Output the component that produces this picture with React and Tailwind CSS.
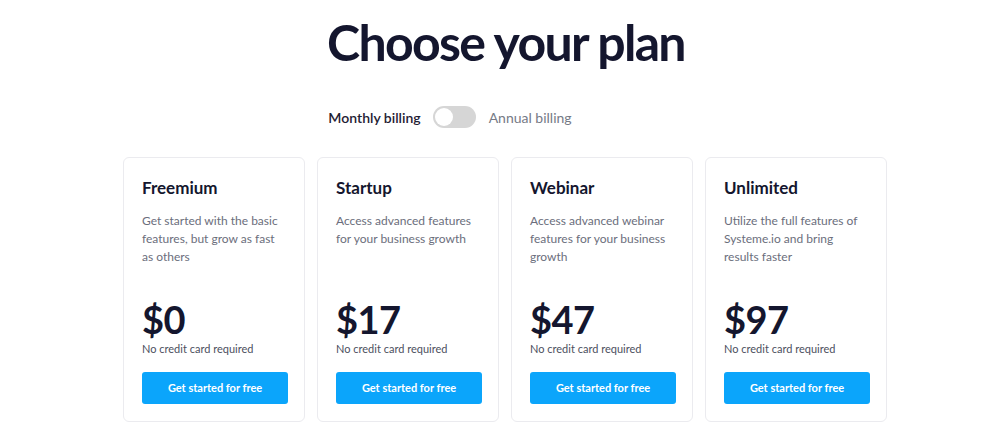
import React from "react";

const plans = [
  { name: "Freemium", desc: "Get started with the basic features, but grow as fast as others", price: "$0" },
  { name: "Startup", desc: "Access advanced features for your business growth", price: "$17" },
  { name: "Webinar", desc: "Access advanced webinar features for your business growth", price: "$47" },
  { name: "Unlimited", desc: "Utilize the full features of Systeme.io and bring results faster", price: "$97" },
];

export default function App() {
  return (
    <div className="w-[1000px] h-[425px] bg-white overflow-hidden flex flex-col items-center" style={{ fontFamily: "Lato, 'Noto Sans', sans-serif" }}>
      <h1 className="mt-[14px] ml-[12px] text-[50px] leading-[56px] font-bold text-[#14162e] tracking-[-1.7px]">Choose your plan</h1>
      <div className="mt-[36px] mr-[100px] flex items-center h-[22px]">
        <span className="text-[14px] font-semibold text-[#1f2133]">Monthly billing</span>
        <div className="ml-[12px] w-[43px] h-[22px] rounded-full bg-[#d6d6d6] p-[2px] flex items-center">
          <div className="w-[18px] h-[18px] rounded-full bg-white"></div>
        </div>
        <span className="ml-[13px] text-[14px] text-[#767a86]">Annual billing</span>
      </div>
      <div className="mt-[29px] ml-[10px] flex gap-[12px]">
        {plans.map((p) => (
          <div key={p.name} className="w-[182px] h-[265px] border border-[#ebebef] rounded-[6px] pl-[18px] pr-[14px] pt-[19px] flex flex-col">
            <div className="text-[17px] leading-[22px] font-bold text-[#14162e]">{p.name}</div>
            <div className="mt-[13px] w-[140px] text-[12px] leading-[18px] text-[#6b6e7c] h-[54px]">{p.desc}</div>
            <div className="mt-[33px] text-[38px] leading-[40px] font-bold text-[#14162e] tracking-[-0.5px]">{p.price}</div>
            <div className="mt-[3px] text-[11px] leading-[14px] text-[#4c4f5e]">No credit card required</div>
            <button className="mt-[16px] w-[146px] h-[32px] rounded-[3px] bg-[#0ba5fb] text-white text-[11px] font-bold">Get started for free</button>
          </div>
        ))}
      </div>
    </div>
  );
}
